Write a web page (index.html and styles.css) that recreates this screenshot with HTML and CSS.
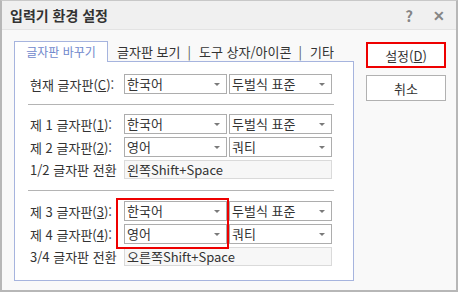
FILE: index.html
```html
<!DOCTYPE html>
<html lang="ko">
<head>
    <meta charset="UTF-8">
    <title>입력기 환경 설정</title>
    <link rel="stylesheet" href="styles.css">
</head>
<body>
    <div class="window">
        <div class="titlebar">
            <span class="title">입력기 환경 설정</span>
            <span class="tb-btn">?</span>
            <span class="tb-btn close">✕</span>
        </div>

        <div class="content">
            <div class="main">
                <div class="tabs">
                    <span class="tab active">글자판 바꾸기</span>
                    <span class="tab">글자판 보기</span>
                    <span class="tab-sep">|</span>
                    <span class="tab">도구 상자/아이콘</span>
                    <span class="tab-sep">|</span>
                    <span class="tab">기타</span>
                </div>

                <div class="panel">
                    <div class="row">
                        <label>현재 글자판(<u>C</u>):</label>
                        <div class="combo">한국어</div>
                        <div class="combo">두벌식 표준</div>
                    </div>

                    <hr class="sep">

                    <div class="group">
                        <div class="row">
                            <label>제 1 글자판(<u>1</u>):</label>
                            <div class="combo">한국어</div>
                            <div class="combo">두벌식 표준</div>
                        </div>
                        <div class="row">
                            <label>제 2 글자판(<u>2</u>):</label>
                            <div class="combo">영어</div>
                            <div class="combo">쿼티</div>
                        </div>
                        <div class="row">
                            <label>1/2 글자판 전환</label>
                            <div class="field">왼쪽Shift+Space</div>
                        </div>
                    </div>

                    <hr class="sep">

                    <div class="group">
                        <div class="row">
                            <label>제 3 글자판(<u>3</u>):</label>
                            <div class="combo">한국어</div>
                            <div class="combo">두벌식 표준</div>
                        </div>
                        <div class="row">
                            <label>제 4 글자판(<u>4</u>):</label>
                            <div class="combo">영어</div>
                            <div class="combo">쿼티</div>
                        </div>
                        <div class="row">
                            <label>3/4 글자판 전환</label>
                            <div class="field">오른쪽Shift+Space</div>
                        </div>
                    </div>

                    <div class="highlight"></div>
                </div>
            </div>

            <div class="buttons">
                <button class="btn default">설정(<u>D</u>)</button>
                <button class="btn">취소</button>
            </div>
        </div>
    </div>
</body>
</html>
```

FILE: styles.css
```css
body { margin: 0; font-family: "Noto Sans CJK KR", "Liberation Sans", sans-serif; font-size: 12px; color: #333; }
.window { width: 458px; height: 292px; box-sizing: border-box; border: 2px solid #b7b7b7; border-top: 1px solid #c8c8c8; background: #f9f9f9; display: flex; flex-direction: column; }
.titlebar { height: 28px; background: #f0f0f0; border-bottom: 1px solid #e3e3e3; display: flex; align-items: center; padding: 0 0 0 8px; }
.title { font-weight: bold; font-size: 14px; color: #333; flex: 1; }
.tb-btn { width: 30px; text-align: center; color: #858585; font-weight: bold; font-size: 15px; }
.tb-btn.close { font-size: 14px; margin-right: 2px; }

.content { display: flex; padding: 11px 0 0 12px; }
.main { width: 340px; display: flex; flex-direction: column; }

.tabs { display: flex; align-items: center; height: 20px; font-size: 13px; }
.tab { padding: 0 7px 0 8px; line-height: 19px; white-space: nowrap; }
.tab.active { width: 92px; box-sizing: content-box; padding: 0; font-size: 12px; text-align: center; color: #7088cc; background: #fff; border: 1px solid #a6b4de; border-bottom: none; height: 20px; position: relative; z-index: 1; margin-bottom: -1px; margin-right: 1px; }
.tab-sep { color: #555; }

.panel { position: relative; height: 206px; border: 1px solid #a6b4de; background: #fff; padding: 12px 20px 0 15px; }

.group { display: flex; flex-direction: column; gap: 3px; }
.row { display: grid; grid-template-columns: 92px 103px 103px; column-gap: 2px; align-items: center; }
.row label { white-space: nowrap; font-size: 13px; }
.combo { height: 20px; box-sizing: border-box; border: 1px solid #adadad; background: #fff; padding: 0 0 0 2px; line-height: 18px; font-size: 13px; position: relative; }
.combo::after { content: ""; position: absolute; right: 6px; top: 8px; border-left: 3px solid transparent; border-right: 3px solid transparent; border-top: 3px solid #7a7a7a; }
.field { grid-column: 2 / 4; height: 19px; box-sizing: border-box; border: 1px solid #dadada; background: #f7f7f7; padding-left: 2px; line-height: 17px; font-size: 13px; }

.sep { border: none; border-top: 1px solid #b4b4b4; margin: 10px -1px 9px -2px; }
.group + .sep { margin: 11px -1px 10px -2px; }

.highlight { position: absolute; left: 101px; top: 136px; width: 113px; height: 51px; box-sizing: border-box; border: 2px solid #ee0000; }

.buttons { display: flex; flex-direction: column; gap: 7px; margin: 1px 0 0 12px; }
.btn { width: 80px; height: 26px; background: #fff; border: 1px solid #b1b1b1; font-family: inherit; font-size: 13px; color: #333; padding: 0; }
.btn.default { border: 2px solid #ee0000; }
```
